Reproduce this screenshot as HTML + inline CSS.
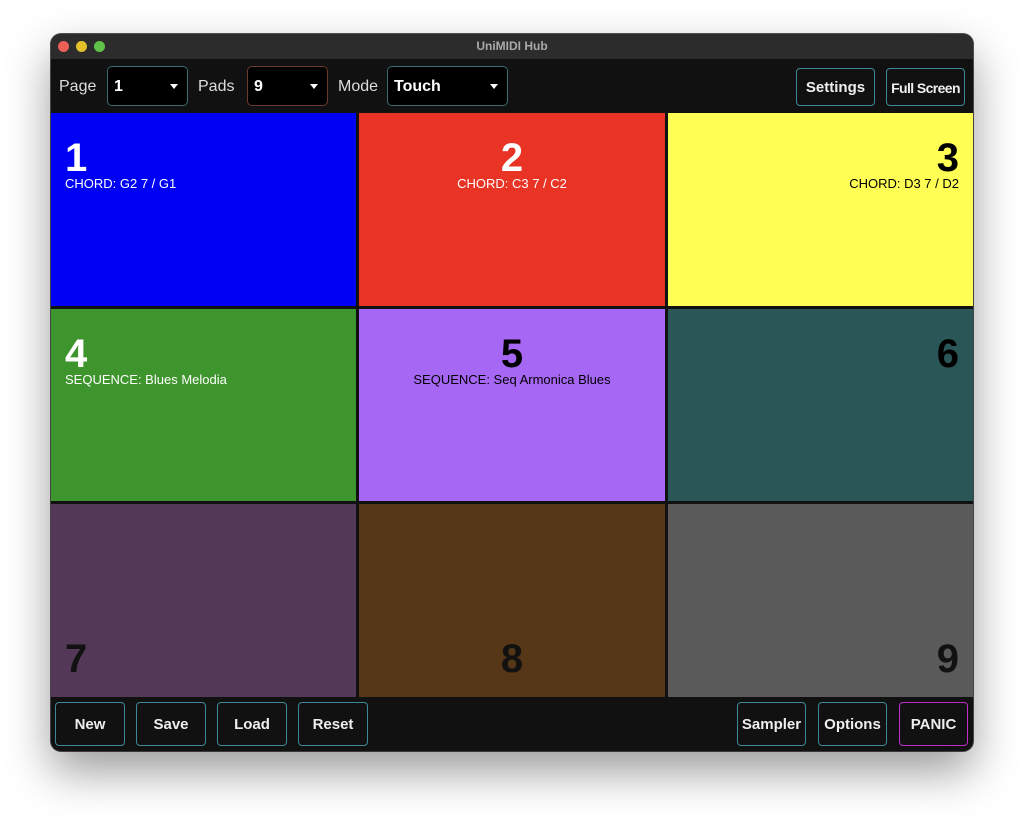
<!DOCTYPE html><html><head><style>
body{margin:0;width:1024px;height:818px;background:#fff;font-family:"Liberation Sans",sans-serif;position:relative;overflow:hidden}
.win{position:absolute;left:51px;top:34px;width:922px;height:717px;background:#111;border-radius:10px;overflow:hidden;box-shadow:0 20px 45px rgba(0,0,0,.4),0 0 0 1px #555}
.tb{position:absolute;left:0;top:0;width:922px;height:25px;background:#2c2c2c;color:#aaa;font-size:12px;font-weight:bold;text-align:center;line-height:25px}
.dot{position:absolute;top:7px;width:11px;height:11px;border-radius:50%}
.abs{position:absolute}
.lbl{color:#ddd;font-size:16px;top:44px}
.dd{position:absolute;top:32px;height:40px;background:#000;border:1px solid #3d6a73;border-radius:5px;color:#fff;font-weight:bold;font-size:16px;line-height:40px;padding-left:6px;box-sizing:border-box}
.dd:after{content:"";position:absolute;right:9px;top:17px;border:4px solid transparent;border-top:5px solid #fff}
.btn{position:absolute;height:40px;border:1px solid #3d8a96;border-radius:4px;color:#eee;font-weight:bold;font-size:15px;text-align:center;line-height:40px;box-sizing:border-box;background:#111;white-space:nowrap;overflow:hidden}
.pad{position:absolute;box-sizing:border-box;padding:0 14px}
.num{font-size:40px;font-weight:bold;position:absolute;left:14px;right:14px}
.sub{font-size:13px;position:absolute;left:14px;right:14px}
</style></head><body>
<div class="win">
<div class="tb">UniMIDI Hub</div>
<div class="dot" style="left:7px;background:#ec5f57"></div>
<div class="dot" style="left:25px;background:#e4c02b"></div>
<div class="dot" style="left:43px;background:#5fc249"></div>
<div class="abs lbl" style="left:8px">Page</div>
<div class="dd" style="left:56px;width:81px">1</div>
<div class="abs lbl" style="left:147px">Pads</div>
<div class="dd" style="left:196px;width:81px;border-color:#6b3a2c">9</div>
<div class="abs lbl" style="left:287px">Mode</div>
<div class="dd" style="left:336px;width:121px">Touch</div>
<div class="btn" style="left:745px;top:34px;width:79px;height:38px;line-height:38px">Settings</div>
<div class="btn" style="left:835px;top:34px;width:79px;height:38px;line-height:38px;font-size:14px;letter-spacing:-0.6px">Full Screen</div>

<div class="pad" style="left:0;top:79px;width:305px;height:193px;background:#0000f5;color:#fff"><div class="num" style="top:23px">1</div><div class="sub" style="top:63px">CHORD: G2 7 / G1</div></div>
<div class="pad" style="left:308px;top:79px;width:306px;height:193px;background:#e93324;color:#fff;text-align:center"><div class="num" style="top:23px">2</div><div class="sub" style="top:63px">CHORD: C3 7 / C2</div></div>
<div class="pad" style="left:617px;top:79px;width:305px;height:193px;background:#fefe55;color:#000;text-align:right"><div class="num" style="top:23px">3</div><div class="sub" style="top:63px">CHORD: D3 7 / D2</div></div>

<div class="pad" style="left:0;top:275px;width:305px;height:192px;background:#3f952d;color:#fff"><div class="num" style="top:23px">4</div><div class="sub" style="top:63px">SEQUENCE: Blues Melodia</div></div>
<div class="pad" style="left:308px;top:275px;width:306px;height:192px;background:#a767f5;color:#000;text-align:center"><div class="num" style="top:23px">5</div><div class="sub" style="top:63px">SEQUENCE: Seq Armonica Blues</div></div>
<div class="pad" style="left:617px;top:275px;width:305px;height:192px;background:#2b5657;color:#000;text-align:right"><div class="num" style="top:23px">6</div></div>

<div class="pad" style="left:0;top:470px;width:305px;height:193px;background:#533957;color:#111"><div class="num" style="top:133px">7</div></div>
<div class="pad" style="left:308px;top:470px;width:306px;height:193px;background:#553616;color:#111;text-align:center"><div class="num" style="top:133px">8</div></div>
<div class="pad" style="left:617px;top:470px;width:305px;height:193px;background:#5a5a5a;color:#111;text-align:right"><div class="num" style="top:133px">9</div></div>

<div class="btn" style="left:4px;top:668px;width:70px;height:44px;line-height:44px">New</div>
<div class="btn" style="left:85px;top:668px;width:70px;height:44px;line-height:44px">Save</div>
<div class="btn" style="left:166px;top:668px;width:70px;height:44px;line-height:44px">Load</div>
<div class="btn" style="left:247px;top:668px;width:70px;height:44px;line-height:44px">Reset</div>
<div class="btn" style="left:686px;top:668px;width:69px;height:44px;line-height:44px">Sampler</div>
<div class="btn" style="left:767px;top:668px;width:69px;height:44px;line-height:44px">Options</div>
<div class="btn" style="left:848px;top:668px;width:69px;height:44px;line-height:44px;border-color:#c02ccc">PANIC</div>
</div>
</body></html>
